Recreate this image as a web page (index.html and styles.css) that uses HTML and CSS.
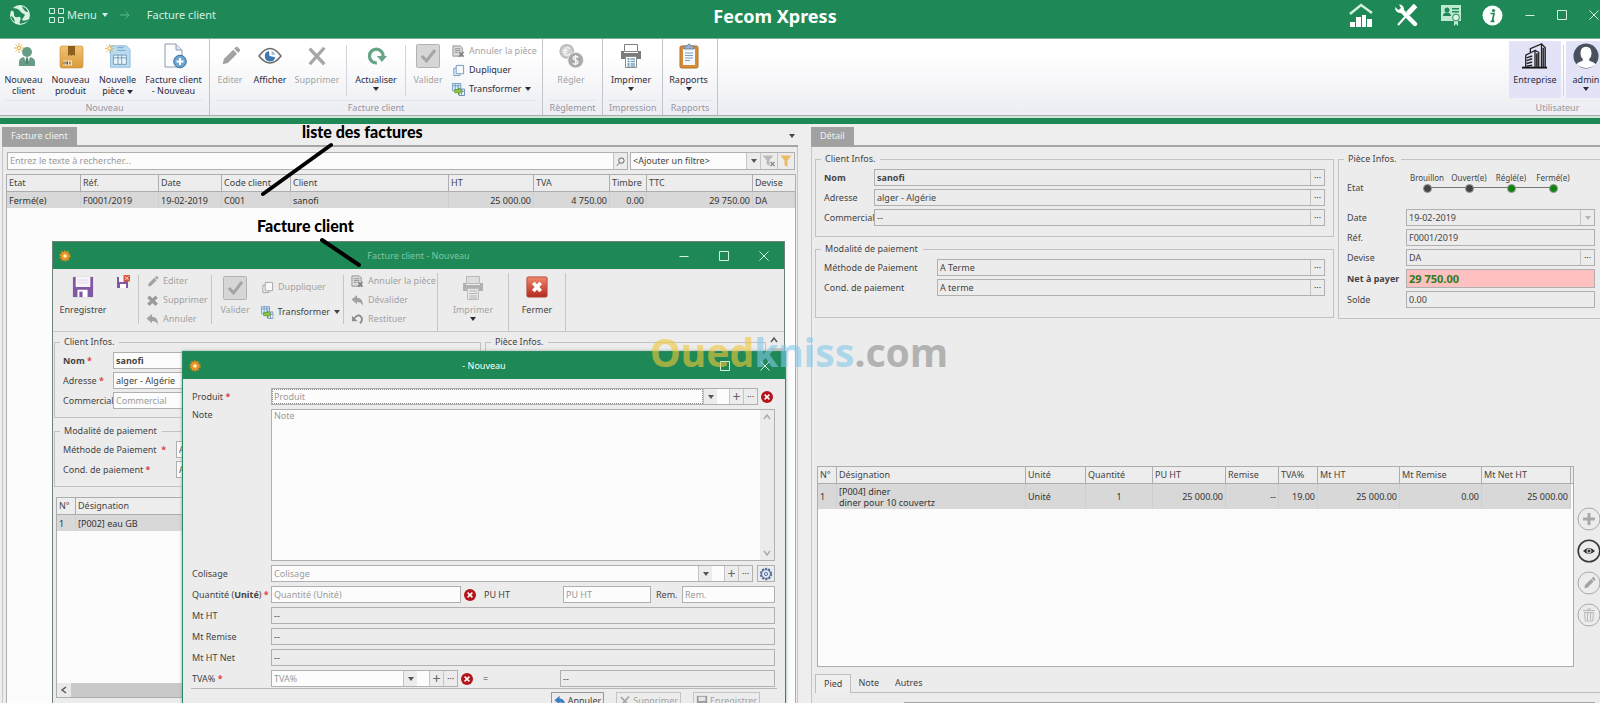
FILE: index.html
```html
<!DOCTYPE html>
<html lang="fr">
<head>
<meta charset="utf-8">
<title>Fecom Xpress</title>
<link rel="stylesheet" href="styles.css">
</head>
<body>
<svg class="defs" aria-hidden="true">
  <defs>
    <linearGradient id="gGold" x1="0" y1="0" x2="0" y2="1"><stop offset="0" stop-color="#f0c274"/><stop offset="1" stop-color="#d99b3c"/></linearGradient>
    <linearGradient id="gRed" x1="0" y1="0" x2="0" y2="1"><stop offset="0" stop-color="#f08a6c"/><stop offset="1" stop-color="#b3281f"/></linearGradient>
  </defs>
  <symbol id="i-spark" viewBox="0 0 10 10"><circle cx="5" cy="5" r="2" fill="#fff4cf" stroke="#e2a83a"/><path d="M5 0v2M5 8v2M0 5h2M8 5h2M1.500 1.500l1.300 1.300M7.200 7.200l1.300 1.300M8.500 1.500 7.200 2.800M1.500 8.500l1.300-1.300" stroke="#e2a83a" stroke-width=".9"/></symbol>
  <symbol id="i-client" viewBox="0 0 26 26"><use href="#i-spark" x="3" y="0" width="10" height="10"/><circle cx="16" cy="9" r="5" fill="#679d86"/><path d="M8 23v-4q0-4 5-5h6q5 1 5 5v4z" fill="#679d86"/><path d="m13 14 3 8 3-8z" fill="#fff"/><path d="m15 15 1-1 1 1 .6 5L16 22l-1.600-2z" fill="#4c8570"/></symbol>
  <symbol id="i-box" viewBox="0 0 26 26"><rect x="2" y="3" width="23" height="22" rx="2" fill="url(#gGold)" stroke="#c98d35" stroke-width=".6"/><path d="M10 3h7v10l-2-1.500-1.500 1.500-1.500-1.500-2 1.500z" fill="#8d5f1d"/><path d="M5 17.500h9v5H5z" fill="#f8e6c4"/><path d="M6 18.500v3M8 18.500v3M9.500 18.500v3M12 18.500v3" stroke="#5b4320"/></symbol>
  <symbol id="i-piece" viewBox="0 0 28 26"><path d="M6 2h17l4 4v19H6z" fill="#b9dcf0" stroke="#8cbad8"/><path d="M13 4h7M13 7h9" stroke="#7f9fb4"/><path d="M9 12h14v10H9z" fill="#e9f6fd" stroke="#6f96b3"/><path d="M9 15h14M14 12v10M18 12v10" stroke="#6f96b3"/><use href="#i-spark" x="0" y="0" width="10" height="10"/></symbol>
  <symbol id="i-docplus" viewBox="0 0 26 26"><path d="M4 1h11l6 6v17H4z" fill="#fbfdff" stroke="#8a9aae"/><path d="M15 1v6h6" fill="#dfe7f0" stroke="#8a9aae"/><circle cx="19" cy="18.500" r="6.300" fill="#6fa4d2" stroke="#3d6fa3"/><path d="M19 15v7M15.500 18.500h7" stroke="#fff" stroke-width="2"/></symbol>
  <symbol id="i-pencil" viewBox="0 0 24 24"><path d="m4 21 1.300-5.600L15.500 5.200l4.300 4.300L9.600 19.700z" fill="#a2a2a2"/><path d="m16.600 4.100 1.800-1.800q1-.8 2 0l2.300 2.300q.8 1 0 2l-1.800 1.800z" fill="#a2a2a2"/></symbol>
  <symbol id="i-eye" viewBox="0 0 26 26"><path d="M2 13q11-15 22 0-11 14-22 0z" fill="#fff" stroke="#6b6b6b" stroke-width="1.500"/><path d="M12 8a5.300 5.300 0 1 0 6.300 6.300L12.500 13z" fill="#3f78b0"/><path d="M14.500 8v3.700h3.700A5 5 0 0 0 14.500 8z" fill="#9bbbd8"/></symbol>
  <symbol id="i-x" viewBox="0 0 24 24"><path d="m4 4 16 17M20 3 4 21" stroke="#a6a6a6" stroke-width="3.600"/></symbol>
  <symbol id="i-refresh" viewBox="0 0 24 24"><path d="M13 19.500a7.500 7.500 0 1 1 6.800-7" fill="none" stroke="#67a588" stroke-width="3.600"/><path d="M13 12h11l-5.500 6.500z" fill="#67a588"/></symbol>
  <symbol id="i-check" viewBox="0 0 26 26"><rect x="1.500" y="1.500" width="23" height="23" rx="1" fill="#d6d6d6" stroke="#b2b2b2"/><path d="m7 13 4.500 5L20 7" fill="none" stroke="#a4a4a4" stroke-width="3"/></symbol>
  <symbol id="i-doccancel" viewBox="0 0 14 14"><path d="M1 1h8l2 2v9H1z" fill="#dcdcdc" stroke="#8f8f8f"/><path d="M3 4h6M3 6h6M3 8h3" stroke="#8f8f8f"/><path d="m7.500 7.500 5 5M12.500 7.500l-5 5" stroke="#7f7f7f" stroke-width="1.600"/></symbol>
  <symbol id="i-copy" viewBox="0 0 14 14"><path d="M2 4.500h6.500v8H2z" fill="#f2f2f2" stroke="currentColor"/><path d="M4.500 1.500h8v9h-8z" fill="#f6f9fc" stroke="currentColor"/></symbol>
  <symbol id="i-transform" viewBox="0 0 14 14"><path d="M.5.5h9v8h-9z" fill="#dcecf8" stroke="#6d9cc3"/><path d="M.5 3h9M3.500.5v8M6.500.5v8" stroke="#6d9cc3"/><path d="M7.500 6.500h6v7h-6z" fill="#eef6fc" stroke="#6d86b3"/><path d="M7.500 9h6M10.500 6.500v7" stroke="#6d86b3"/><path d="M3 7h4V5l4 4-4 3.500V10.500H3z" fill="#8cc63f" stroke="#4f8a1e" stroke-width=".7"/></symbol>
  <symbol id="i-coins" viewBox="0 0 28 28"><circle cx="9.500" cy="9" r="8" fill="#bcbcbc"/><circle cx="9.500" cy="9" r="6" fill="#cfcfcf"/><path d="M13 6q-5-3-6 3t6 3M5 8h6M5 10h5" fill="none" stroke="#f4f4f4" stroke-width="1.400"/><circle cx="19" cy="18.500" r="8.500" fill="#a9a9a9" stroke="#f4f4f6"/><path d="M22 15.500q-3-2-5-.3t2 3.300 1.800 3.500-5-.2M19 13v11" fill="none" stroke="#f6f6f6" stroke-width="1.500"/></symbol>
  <symbol id="i-printer" viewBox="0 0 24 26"><path d="M5.500 1.500h13v7h-13z" fill="#fff" stroke="#808080"/><path d="M2 8h3v2h14V8h3v8H2z" fill="#7b7b7b"/><path d="M6.500 13.500h11v11h-11z" fill="#fff" stroke="#8b8b8b"/><path d="M8.500 16h2M8.500 18.500h2M8.500 21h2M8.500 23h2" stroke="#4f8fb8" stroke-width="1.300"/><path d="M11.500 16H16M11.500 18.500H16M11.500 21H16M11.500 23H16" stroke="#79a7bb" stroke-width="1.300"/></symbol>
  <symbol id="i-printer-off" viewBox="0 0 24 26"><path d="M5.500 1.500h13v7h-13z" fill="#dedede" stroke="#b8b8b8"/><path d="M2 8h3v2h14V8h3v8H2z" fill="#b1b1b1"/><path d="M6.500 13.500h11v11h-11z" fill="#e6e6e6" stroke="#bcbcbc"/><path d="M8.500 16H16M8.500 18.500H16M8.500 21H16M8.500 23H16" stroke="#b5b5b5"/></symbol>
  <symbol id="i-clipboard" viewBox="0 0 24 26"><rect x="3" y="3" width="18" height="22" rx="1.500" fill="#d68c34" stroke="#b0702a"/><path d="M6 6h12v16H6z" fill="#f4f8fc"/><path d="M8 10h8M8 12.500h8M8 15h8M8 17.500h5" stroke="#7f9fc0"/><path d="M7 3h3q2-4 4 0h3v3H7z" fill="#9db0c8" stroke="#5e7696" stroke-width=".8"/></symbol>
  <symbol id="i-building" viewBox="0 0 28 28"><path d="M0 26.500h27" stroke="#111" stroke-width="2"/><path d="M4 26V13l10-5v18M9 10V6l12-5v25M21 1l4 4v21M14 8l4 2v16" fill="none" stroke="#222" stroke-width="1.400"/><path d="m5 16 6-2M5 19l6-2M5 22l6-1.500M5 25l6-1" stroke="#222" stroke-width="1.600"/><path d="M16 11v15M23 5v21" stroke="#333" stroke-width="2"/></symbol>
  <symbol id="i-user" viewBox="0 0 28 28"><circle cx="14" cy="14" r="13.500" fill="#47525e"/><path d="M14 4q6 0 6 7 0 4-2.500 6v2q5 1 7 4-10 8-21 0 2-3 7-4v-2Q8 15 8 11q0-7 6-7z" fill="#fff"/></symbol>
  <symbol id="i-gear" viewBox="0 0 14 14"><circle cx="7" cy="7" r="5.200" fill="none" stroke="currentColor" stroke-width="2" stroke-dasharray="2.200 1.060"/><circle cx="7" cy="7" r="4.300" fill="#e7edf6" stroke="currentColor"/><circle cx="7" cy="7" r="1.600" fill="none" stroke="currentColor"/></symbol>
  <symbol id="i-sun" viewBox="0 0 12 12"><circle cx="6" cy="6" r="4.600" fill="none" stroke="#dd8a1e" stroke-width="2" stroke-dasharray="1.800 1.080"/><circle cx="6" cy="6" r="4.200" fill="#e9952a"/><circle cx="6" cy="6" r="1.800" fill="#fff0b8"/></symbol>
  <symbol id="i-floppy" viewBox="0 0 24 24"><path d="M1 1h22v22H1z" fill="#8258a3"/><path d="M4 1h16v11H4z" fill="#f7f4fa"/><path d="M6 4.500h12M6 7.500h12" stroke="#ddd5e6"/><path d="M6 15h11v8H6z" fill="#fff"/><path d="M8 17h3.500v6H8z" fill="#8258a3"/></symbol>
  <symbol id="i-floppyx" viewBox="0 0 14 14"><path d="M1 2h11v11H1z" fill="#8258a3"/><path d="M3 2h5v5H3z" fill="#f7f4fa"/><path d="M4 9h6v4H4z" fill="#fff"/><path d="M7.500 0H14v6.500H7.500z" fill="#d8573a"/><path d="m9 1.500 3.500 3.500M12.500 1.500 9 5" stroke="#fbd9cf"/></symbol>
  <symbol id="i-xs" viewBox="0 0 14 14"><path d="m2.500 3 9 8.500M11.500 3l-9 8.500" stroke="#9b9b9b" stroke-width="3.600"/></symbol>
  <symbol id="i-undo" viewBox="0 0 14 14"><path d="M.5 6 6.500 1v3Q13 4 13 13q-2-4.500-6.500-4.500V11z" fill="currentColor"/></symbol>
  <symbol id="i-restore" viewBox="0 0 14 14"><path d="M3.500 6Q8-.5 11.500 5q1 4-2 6" fill="none" stroke="#8d8d8d" stroke-width="2"/><path d="M1 3v6h6z" fill="#8d8d8d"/></symbol>
  <symbol id="i-close" viewBox="0 0 24 24"><rect x="1" y="1" width="22" height="22" rx="1.500" fill="url(#gRed)" stroke="#b5463a"/><path d="m8 7.500 8 9M16 7.500l-8 9" stroke="#fff" stroke-width="4"/></symbol>
  <symbol id="i-err" viewBox="0 0 12 12"><circle cx="6" cy="6" r="6" fill="#b3151b"/><path d="m3.600 3.600 4.800 4.800M8.400 3.600 3.600 8.400" stroke="#fff" stroke-width="1.500"/></symbol>
  <symbol id="i-min" viewBox="0 0 10 10"><path d="M.5 5.500h9" stroke="currentColor"/></symbol>
  <symbol id="i-max" viewBox="0 0 10 10"><path d="M.5.5h9v9h-9z" fill="none" stroke="currentColor"/></symbol>
  <symbol id="i-cls" viewBox="0 0 10 10"><path d="m.5.5 9 9M9.500.5l-9 9" stroke="currentColor"/></symbol>
  <symbol id="i-funnel" viewBox="0 0 12 12"><path d="M.5.5h11l-4 5V12l-3-2V5.500z" fill="currentColor"/></symbol>
</svg>

<header class="titlebar">
  <svg class="globe" viewBox="0 0 22 22"><circle cx="11" cy="11" r="10" fill="#d9f0e3"/><path d="M3 4q6 0 8 3t4 3-1 4 4 2-1 2-6-1-2-4-4-3-3-3z" fill="#1e8956"/><path d="M13 2q5 2 6 6-4 0-6-6zM2 12q3 1 4 6-4-2-4-6z" fill="#1e8956"/></svg>
  <button class="menu"><svg width="15" height="15" viewBox="0 0 15 15"><path d="M.5.5h5v5h-5zM9.500.5h5v5h-5zM.5 9.500h5v5h-5zM9.500 9.500h5v5h-5z" fill="none" stroke="currentColor"/></svg>Menu<i class="caret"></i></button>
  <svg class="arrow" width="10" height="10" viewBox="0 0 10 10"><path d="M0 5h9M5.500 1.500 9 5 5.500 8.500" fill="none" stroke="#5fb58b"/></svg>
  <span class="crumb">Facture client</span>
  <h1>Fecom Xpress</h1>
  <nav class="tools">
    <button aria-label="Statistiques"><svg width="24" height="24" viewBox="0 0 24 24"><path d="M1 19h5v5H1zM7 14h5v10H7zM13 12h4v12h-4zM18 16h5v8h-5z" fill="#fff"/><path d="m1 11 11-9 11 8" fill="none" stroke="#d5f0e1" stroke-width="2.400"/></svg></button>
    <button aria-label="Outils"><svg width="24" height="24" viewBox="0 0 24 24"><path d="M21.500 2.500 4 22" stroke="#fff" stroke-width="2"/><path d="m21.500 2.500-7.500 8" stroke="#fff" stroke-width="5"/><path d="m8 8 13 13" stroke="#fff" stroke-width="4.400" stroke-linecap="round"/><path d="M5 1.500q5 0 5 5.500L7 10Q1 10 1 4l3.500 3L7 5z" fill="#fff"/></svg></button>
    <button aria-label="Licence"><svg width="22" height="24" viewBox="0 0 22 24"><path d="M1 2h20v16h-3v5l-2-2-2 2v-5H1z" fill="#bfe8d1"/><circle cx="7" cy="7" r="2.500" fill="#1e8956"/><path d="M3 13q0-3.500 4-3.500t4 3.500zM12 5h7v1.500h-7zM12 8h7v1.500h-7z" fill="#1e8956"/><circle cx="16" cy="14.500" r="3.400" fill="#d9f3e5" stroke="#1e8956"/></svg></button>
    <button aria-label="Informations"><svg width="21" height="21" viewBox="0 0 21 21"><circle cx="10.500" cy="10.500" r="10" fill="#fff"/><circle cx="11.500" cy="5.500" r="1.600" fill="#1e8956"/><path d="M8.500 8.500h3.500l-1.500 7h1.500M8.500 16.500h4" fill="none" stroke="#1e8956" stroke-width="1.700"/></svg></button>
  </nav>
  <div class="winctl"><button aria-label="Réduire"><svg><use href="#i-min"/></svg></button><button aria-label="Agrandir"><svg><use href="#i-max"/></svg></button><button aria-label="Quitter"><svg><use href="#i-cls"/></svg></button></div>
</header>

<div class="ribbon">
  <section class="group g-new">
    <div class="items">
      <button class="big"><svg><use href="#i-client"/></svg>Nouveau<br>client</button>
      <button class="big"><svg><use href="#i-box"/></svg>Nouveau<br>produit</button>
      <button class="big"><svg><use href="#i-piece"/></svg>Nouvelle<span>pièce <i class="caret"></i></span></button>
      <button class="big wide"><svg><use href="#i-docplus"/></svg>Facture client<br>- Nouveau</button>
    </div>
    <h2>Nouveau</h2>
  </section>
  <section class="group g-invoice">
    <div class="items">
      <button class="big w40" disabled><svg class="sm"><use href="#i-pencil"/></svg>Editer</button>
      <button class="big w40"><svg><use href="#i-eye"/></svg>Afficher</button>
      <button class="big w54" disabled><svg class="sm"><use href="#i-x"/></svg>Supprimer</button>
      <i class="vsep"></i>
      <button class="big w54"><svg class="sm"><use href="#i-refresh"/></svg>Actualiser<i class="caret"></i></button>
      <i class="vsep"></i>
      <button class="big w40" disabled><svg><use href="#i-check"/></svg>Valider</button>
      <div class="smalls">
        <button disabled><svg><use href="#i-doccancel"/></svg>Annuler la pièce</button>
        <button><svg class="blue"><use href="#i-copy"/></svg>Dupliquer</button>
        <button><svg><use href="#i-transform"/></svg>Transformer <i class="caret"></i></button>
      </div>
    </div>
    <h2>Facture client</h2>
  </section>
  <section class="group g-pay"><div class="items"><button class="big" disabled><svg><use href="#i-coins"/></svg>Régler</button></div><h2>Règlement</h2></section>
  <section class="group g-pay"><div class="items"><button class="big"><svg><use href="#i-printer"/></svg>Imprimer<i class="caret"></i></button></div><h2>Impression</h2></section>
  <section class="group g-rep"><div class="items"><button class="big"><svg><use href="#i-clipboard"/></svg>Rapports<i class="caret"></i></button></div><h2>Rapports</h2></section>
  <section class="group g-user">
    <div class="items">
      <button class="big tint w52"><svg><use href="#i-building"/></svg>Entreprise</button>
      <i class="vsep"></i>
      <button class="big tint w40"><svg><use href="#i-user"/></svg>admin<i class="caret"></i></button>
    </div>
    <h2>Utilisateur</h2>
  </section>
</div>

<main class="workspace">
  <section class="pane list">
    <div class="tabs"><span class="tab">Facture client</span><i class="caret"></i></div>
    <div class="body">
      <div class="filters">
        <div class="field white grow"><input aria-label="Rechercher" placeholder="Entrez le texte à rechercher..."><button aria-label="Chercher"><svg width="9" height="9" viewBox="0 0 10 10"><circle cx="6" cy="4" r="3" fill="none" stroke="#555"/><path d="M4 6.500 1 9.500" stroke="#555"/></svg></button></div>
        <div class="field white filter"><select aria-label="Filtre"><option>&lt;Ajouter un filtre&gt;</option></select><span class="btn"><i class="caret"></i></span><button class="fb" aria-label="Effacer le filtre"><svg width="14" height="12" viewBox="0 0 14 12"><path d="M.5.5h11l-4 4.500v6l-3-2V5z" fill="#b9b9b9"/><path d="m8.500 7 4 4M12.500 7l-4 4" stroke="#8d8d8d" stroke-width="1.500"/></svg></button><button class="fb" aria-label="Filtrer"><svg class="amber" width="12" height="12"><use href="#i-funnel"/></svg></button></div>
      </div>
      <div class="grid">
        <table>
          <colgroup><col class="c74"><col class="c78"><col class="c63"><col class="c69"><col><col class="c85"><col class="c76"><col class="c37"><col class="c106"><col class="c43"></colgroup>
          <thead><tr><th>Etat</th><th>Réf.</th><th>Date</th><th>Code client</th><th>Client</th><th>HT</th><th>TVA</th><th>Timbre</th><th>TTC</th><th>Devise</th></tr></thead>
          <tbody><tr><td>Fermé(e)</td><td>F0001/2019</td><td>19-02-2019</td><td>C001</td><td>sanofi</td><td class="n">25 000.00</td><td class="n">4 750.00</td><td class="n">0.00</td><td class="n">29 750.00</td><td>DA</td></tr></tbody>
        </table>
      </div>
    </div>
  </section>

  <section class="pane detail">
    <div class="tabs"><span class="tab">Détail</span></div>
    <div class="body">
      <div class="infos">
        <div class="col">
          <fieldset class="client"><legend>Client Infos.</legend>
            <label for="nom" class="b">Nom</label><div class="field"><input class="b" id="nom" value="sanofi" readonly><button>···</button></div>
            <label for="adr">Adresse</label><div class="field"><input id="adr" value="alger - Algérie" readonly><button>···</button></div>
            <label for="com">Commercial</label><div class="field"><input id="com" value="--" readonly><button>···</button></div>
          </fieldset>
          <fieldset class="modal"><legend>Modalité de paiement</legend>
            <label for="met">Méthode de Paiement</label><div class="field"><input id="met" value="A Terme" readonly><button>···</button></div>
            <label for="con">Cond. de paiement</label><div class="field"><input id="con" value="A terme" readonly><button>···</button></div>
          </fieldset>
        </div>
        <fieldset class="piece"><legend>Pièce Infos.</legend>
          <span>Etat</span><ol class="steps"><li>Brouillon</li><li>Ouvert(e)</li><li class="on">Réglé(e)</li><li class="on">Fermé(e)</li></ol>
          <label for="dat">Date</label><div class="field"><select id="dat"><option>19-02-2019</option></select><span class="btn off"><i class="caret"></i></span></div>
          <label for="ref">Réf.</label><div class="field"><input id="ref" value="F0001/2019" readonly></div>
          <label for="dev">Devise</label><div class="field"><input id="dev" value="DA" readonly><button>···</button></div>
          <label for="net" class="b">Net à payer</label><div class="field net"><input id="net" value="29 750.00" readonly></div>
          <label for="sol">Solde</label><div class="field"><input id="sol" value="0.00" readonly></div>
        </fieldset>
      </div>
      <div class="lines">
        <div class="grid">
          <table>
            <colgroup><col class="c19"><col><col class="c60"><col class="c67"><col class="c73"><col class="c53"><col class="c39"><col class="c82"><col class="c82"><col class="c89"><col class="c2"></colgroup>
            <thead><tr><th>N°</th><th>Désignation</th><th>Unité</th><th>Quantité</th><th>PU HT</th><th>Remise</th><th>TVA%</th><th>Mt HT</th><th>Mt Remise</th><th>Mt Net HT</th><th></th></tr></thead>
            <tbody><tr><td>1</td><td>[P004] diner<br>diner pour 10 couvertz</td><td>Unité</td><td class="c">1</td><td class="n">25 000.00</td><td class="n">--</td><td class="n">19.00</td><td class="n">25 000.00</td><td class="n">0.00</td><td class="n">25 000.00</td><td class="blank"></td></tr></tbody>
          </table>
        </div>
        <div class="rounds">
          <button aria-label="Ajouter"><svg viewBox="0 0 24 24"><circle cx="12" cy="12" r="11"/><path d="M12 6v12M6 12h12" stroke-width="3"/></svg></button>
          <button class="dark" aria-label="Voir"><svg viewBox="0 0 24 24"><circle cx="12" cy="12" r="10.800" stroke-width="1.600"/><path d="M6 12q6-6 12 0-6 6-12 0z" fill="#333" stroke="none"/><circle cx="12" cy="12" r="2" stroke="#eee"/></svg></button>
          <button aria-label="Editer"><svg viewBox="0 0 24 24"><circle cx="12" cy="12" r="11"/><g stroke="none"><use href="#i-pencil" x="5" y="5" width="14" height="14"/></g></svg></button>
          <button aria-label="Supprimer"><svg viewBox="0 0 24 24"><circle cx="12" cy="12" r="11"/><path d="M6 7.500h12M10 6h4M7.500 9.500l.8 8.500h7.400l.8-8.500zM10.500 10v7M13.500 10v7" stroke-width=".8"/></svg></button>
        </div>
      </div>
      <div class="foot"><div class="ftabs"><button class="sel">Pied</button><button>Note</button><button>Autres</button></div><div class="fbody"><div class="fbox"></div></div></div>
    </div>
  </section>
</main>

<section class="win win-invoice">
  <header><svg class="sun"><use href="#i-sun"/></svg><h3>Facture client - Nouveau</h3><div class="ctl"><button aria-label="Réduire"><svg><use href="#i-min"/></svg></button><button aria-label="Agrandir"><svg><use href="#i-max"/></svg></button><button aria-label="Fermer"><svg><use href="#i-cls"/></svg></button></div></header>
  <div class="toolbar">
    <button class="big w60"><svg class="sm"><use href="#i-floppy"/></svg>Enregistrer</button>
    <button class="mini" aria-label="Enregistrer et fermer"><svg width="14" height="14"><use href="#i-floppyx"/></svg></button>
    <i class="vsep"></i>
    <div class="smalls w66"><button disabled><svg><use href="#i-pencil"/></svg>Editer</button><button disabled><svg><use href="#i-xs"/></svg>Supprimer</button><button disabled><svg><use href="#i-undo"/></svg>Annuler</button></div>
    <i class="vsep"></i>
    <button class="big w40" disabled><svg><use href="#i-check"/></svg>Valider</button>
    <div class="smalls two"><button disabled><svg><use href="#i-copy"/></svg>Duppliquer</button><button><svg><use href="#i-transform"/></svg>Transformer <i class="caret"></i></button></div>
    <i class="vsep"></i>
    <div class="smalls w90"><button disabled><svg><use href="#i-doccancel"/></svg>Annuler la pièce</button><button disabled><svg><use href="#i-undo"/></svg>Dévalider</button><button disabled><svg><use href="#i-restore"/></svg>Restituer</button></div>
    <i class="vsep full"></i>
    <button class="big w70" disabled><svg><use href="#i-printer-off"/></svg>Imprimer<i class="caret"></i></button>
    <i class="vsep full"></i>
    <button class="big w56"><svg class="sm"><use href="#i-close"/></svg>Fermer</button>
    <i class="vsep full"></i>
  </div>
  <div class="wbody">
    <div class="col">
      <fieldset class="client"><legend>Client Infos.</legend>
        <label for="n2" class="b">Nom <em>*</em></label><div class="field white"><input class="b" id="n2" value="sanofi"></div>
        <label for="a2">Adresse <em>*</em></label><div class="field white"><input id="a2" value="alger - Algérie"></div>
        <label for="c2">Commercial</label><div class="field white"><input id="c2" placeholder="Commercial"></div>
      </fieldset>
      <fieldset class="modal"><legend>Modalité de paiement</legend>
        <label for="m2">Méthode de Paiement &nbsp;<em>*</em></label><div class="field white"><input id="m2" value="A Terme"></div>
        <label for="k2">Cond. de paiement <em>*</em></label><div class="field white"><input id="k2" value="A terme"></div>
      </fieldset>
      <div class="grid">
        <table>
          <colgroup><col class="c19"><col></colgroup>
          <thead><tr><th>N°</th><th>Désignation</th></tr></thead>
          <tbody><tr><td>1</td><td>[P002] eau GB</td></tr></tbody>
        </table>
        <div class="hscroll"><svg width="8" height="8" viewBox="0 0 8 8"><path d="M6 1 2 4l4 3" fill="none" stroke="#555" stroke-width="1.400"/></svg></div>
      </div>
    </div>
    <fieldset class="piece"><legend>Pièce Infos.</legend></fieldset>
    <div class="vscroll"><svg width="8" height="8" viewBox="0 0 8 8"><path d="m1 6 3-4 3 4" fill="none" stroke="#555" stroke-width="1.400"/></svg></div>
  </div>
</section>

<section class="win win-line">
  <header><svg class="sun"><use href="#i-sun"/></svg><h3>- Nouveau</h3><div class="ctl"><button aria-label="Agrandir"><svg><use href="#i-max"/></svg></button><button aria-label="Fermer"><svg><use href="#i-cls"/></svg></button></div></header>
  <form class="lform">
    <label for="pr">Produit <em>*</em></label>
    <div class="row"><div class="field white grow focus"><input id="pr" placeholder="Produit"><span class="btn"><i class="caret"></i></span><span class="gap"></span><button type="button" class="plus">+</button><button type="button">···</button></div><svg class="err"><use href="#i-err"/></svg><span class="pad"></span></div>
    <label for="no" class="top">Note</label>
    <div class="field white note"><textarea id="no" placeholder="Note"></textarea><div class="track"><svg width="8" height="8" viewBox="0 0 8 8"><path d="m1 6 3-4 3 4" fill="none" stroke="#aaa" stroke-width="1.400"/></svg><svg width="8" height="8" viewBox="0 0 8 8"><path d="m1 2 3 4 3-4" fill="none" stroke="#aaa" stroke-width="1.400"/></svg></div></div>
    <label for="co">Colisage</label>
    <div class="row"><div class="field white grow"><input id="co" placeholder="Colisage"><span class="btn"><i class="caret"></i></span><span class="gap"></span><button type="button" class="plus">+</button><button type="button">···</button></div><button type="button" class="gear" aria-label="Options"><svg width="14" height="14"><use href="#i-gear"/></svg></button></div>
    <label for="qt">Quantité (<b>Unité</b>) <em>*</em></label>
    <div class="row"><div class="field white grow"><input id="qt" placeholder="Quantité (Unité)"></div><svg class="err"><use href="#i-err"/></svg><label for="pu" class="l-pu">PU HT</label><div class="field white f88"><input id="pu" placeholder="PU HT"></div><label for="re" class="l-re">Rem.</label><div class="field white f93"><input id="re" placeholder="Rem."></div></div>
    <label for="mh">Mt HT</label><div class="field"><input id="mh" value="--" readonly></div>
    <label for="mr">Mt Remise</label><div class="field"><input id="mr" value="--" readonly></div>
    <label for="mn">Mt HT Net</label><div class="field"><input id="mn" value="--" readonly></div>
    <label for="tv">TVA% <em>*</em></label>
    <div class="row"><div class="field white grow"><input id="tv" placeholder="TVA%"><span class="btn"><i class="caret"></i></span><span class="gap"></span><button type="button" class="plus">+</button><button type="button">···</button></div><svg class="err"><use href="#i-err"/></svg><span class="eq">=</span><div class="field f215"><input aria-label="Montant TVA" value="--" readonly></div></div>
  </form>
  <footer><button><svg class="blue2"><use href="#i-undo"/></svg>Annuler</button><button disabled><svg><use href="#i-x"/></svg>Supprimer</button><button disabled><svg viewBox="0 0 14 14"><path d="M1 1h12v12H1z" fill="#999"/><path d="M3 2h8v5H3zM4 9h6v3H4z" fill="#e6e6e6"/></svg>Enregistrer</button></footer>
</section>

<p class="note-text t1">liste des factures</p>
<p class="note-text t2">Facture client</p>
<svg class="strokes" width="400" height="300"><path d="m331 145-68 49M322 240l37 25" stroke="#000" stroke-width="4" stroke-linecap="round"/></svg>
<p class="mark"><span class="m1">Oued</span><span class="m2">kniss</span><span class="m3">.com</span></p>
</body>
</html>
```
FILE: styles.css
```css
* { box-sizing: border-box; }
html, body { height: 100%; }
body {
  margin: 0;
  display: flex;
  flex-direction: column;
  overflow: hidden;
  background: #eeeeee;
  color: #444;
  font: 9px/12px "Noto Sans", "Open Sans", sans-serif;
}
button, input, select, textarea { font: inherit; color: inherit; margin: 0; }
button { border: 0; padding: 0; background: none; white-space: nowrap; }
h1, h2, h3, p, ol { margin: 0; padding: 0; font: inherit; list-style: none; }
label, span { white-space: nowrap; }
em { color: #e23b3b; font-style: normal; font-weight: bold; }
.b { font-weight: bold; }
.defs { position: absolute; width: 0; height: 0; }
.caret {
  display: inline-block;
  border: 3px solid transparent;
  border-top: 4px solid currentColor;
  border-bottom: 0;
}
.grow { flex: 1; }

/* Title bar */
.titlebar {
  position: relative;
  display: flex;
  align-items: center;
  flex: none;
  height: 39px;
  padding: 0 0 8px 9px;
  overflow: hidden;
  background: #1e8956;
  border-bottom: 1px solid #7fae97;
  color: #d5efe1;
  font-size: 11px;
}
.globe { width: 22px; height: 22px; }
.menu { display: flex; align-items: center; gap: 3px; margin-left: 18px; }
.menu .caret { margin-left: 2px; }
.arrow { margin: 0 17px 0 12px; }
.titlebar h1 {
  position: absolute;
  left: 0;
  right: 0;
  top: 4px;
  padding-right: 50px;
  text-align: center;
  color: #fff;
  font: bold 18px/24px "Noto Sans", sans-serif;
}
.tools { display: flex; margin-left: auto; position: relative; }
.tools button { width: 45px; height: 30px; display: flex; align-items: center; justify-content: center; }
.tools button:last-child { width: 41px; padding-right: 3px; }
.winctl { display: flex; margin-right: -10px; position: relative; }
.winctl button { width: 32px; height: 30px; display: flex; align-items: center; justify-content: center; }
.winctl svg { width: 10px; height: 10px; }

/* Ribbon */
.ribbon {
  display: flex;
  flex: none;
  height: 85px;
  overflow: hidden;
  border-bottom: 6px solid #1e8956;
  box-shadow: inset 0 -2px #cfe5da, inset 0 -3px #a9adb0;
  background: linear-gradient(#ffffff 20%, #edeef3 90%);
  color: #2b2b40;
}
.group {
  display: flex;
  flex-direction: column;
  flex: none;
  margin-bottom: 3px;
  border-right: 1px solid #c4c5cc;
}
.items { display: flex; height: 61px; padding-top: 2px; justify-content: center; }
.group h2 {
  margin: 0 6px;
  border-top: 1px solid #e2e2e8;
  text-align: center;
  line-height: 14px;
  color: #9696a0;
}
.g-new { width: 210px; }
.g-new .items, .g-invoice .items { justify-content: flex-start; }
.g-invoice { width: 333px; }
.g-pay { width: 60px; }
.g-rep { width: 55px; }
.g-pay .items, .g-rep .items { padding-right: 3px; }
.g-user { width: 99px; margin-left: auto; margin-right: -7px; border: 0; }
.g-user h2 { border-color: #ececf2; }
.big {
  display: flex;
  flex-direction: column;
  align-items: center;
  flex: none;
  width: 47px;
  line-height: 11px;
  padding-top: 2px;
  white-space: normal;
  text-align: center;
}
.big svg { width: 26px; height: 26px; margin-bottom: 5px; }
.big svg.sm { width: 22px; height: 22px; margin: 2px 0 7px; }
.big > .caret { margin-top: 2px; color: #2b2b33; }
.big.wide { width: 65px; white-space: nowrap; }
.big.w40 { width: 40px; }
.big.w52 { width: 52px; }
.big.w54 { width: 54px; }
.big.w56 { width: 56px; }
.big.w60 { width: 60px; }
.big.w70 { width: 70px; }
.smalls.w66 { width: 66px; }
.smalls.w90 { width: 90px; }
button:disabled { color: #a3a3a3; }
.tint { background: #e3e3f7; height: 57px; }
.vsep { flex: none; width: 1px; margin: 4px 2px; background: #d4d4da; }
.smalls { display: flex; flex-direction: column; gap: 5px; padding: 3px 0 0 4px; }
.smalls button { display: flex; align-items: center; gap: 4px; height: 14px; }
.smalls svg { width: 13px; height: 13px; }
.blue { color: #6c95bf; }

/* Workspace */
.workspace {
  flex: 1;
  min-height: 0;
  display: grid;
  grid-template-columns: 798fr 789fr;
  gap: 13px;
}
.pane { display: flex; flex-direction: column; min-width: 0; min-height: 0; }
.tabs {
  display: flex;
  align-items: center;
  height: 23px;
  padding-top: 3px;
  border-bottom: 2px solid #a5a5a5;
  justify-content: space-between;
}
.tabs > .caret { margin-right: 3px; }
.tab { padding: 3px 9px 4px; background: #a1a1a1; color: #f3f3f3; }
.list .tabs { margin-left: 2px; }
.list .body {
  flex: 1;
  display: flex;
  flex-direction: column;
  min-height: 0;
  margin-left: 2px;
  padding: 5px 1px 0 3px;
  border: solid #c6c6c6;
  border-width: 0 1px;
  background: #ececec;
}
.filters { display: flex; gap: 2px; padding: 0 1px; margin-bottom: 4px; }
.filters .field { height: 18px; }
.filter { width: 165px; }
.fb.fb { width: 17px; }
.amber { color: #ecb964; }

.field {
  display: flex;
  min-width: 0;
  height: 17px;
  border: 1px solid #b0b0b0;
  background: #ececec;
}
.field input, .field select, .field textarea {
  flex: 1;
  min-width: 0;
  width: 0;
  padding: 0 2px;
  border: 0;
  outline: 0;
  resize: none;
  appearance: none;
  background: transparent;
}
.field ::placeholder { color: #9b9b9b; opacity: 1; }
.field.white { background: #fcfcfc; }
.field button, .btn {
  display: flex;
  align-items: center;
  justify-content: center;
  flex: none;
  width: 14px;
  border-left: 1px solid #c4c4c4;
  background: #ececec;
}
.btn { color: #555; }
.btn.off { color: #b5b5b5; }
.gap { width: 12px; }
.field .plus { font-size: 14px; color: #666; }

/* Data grids */
.grid { border: 1px solid #adadad; background: #fcfcfc; }
.list .grid { flex: 1; border-bottom: 0; }
table { width: 100%; table-layout: fixed; border-collapse: separate; border-spacing: 0; }
th, td { padding: 0 2px; text-align: left; white-space: nowrap; overflow: hidden; }
th {
  height: 17px;
  background: #ededed;
  font-weight: normal;
  border-right: 1px solid #adadad;
  border-bottom: 1px solid #adadad;
}
th:last-child { border-right: 0; }
td { height: 16px; background: #d8d8d8; border-right: 1px solid #d0d0d0; color: #333; line-height: 11px; }
td.n { text-align: right; }
td.c { text-align: center; }
td.blank { background: #fcfcfc; border: 0; }
th:empty, td.blank { padding: 0; }
.c2 { width: 2px; }
.c19 { width: 19px; }
.c37 { width: 37px; }
.c39 { width: 39px; }
.c43 { width: 42px; }
.c53 { width: 53px; }
.c60 { width: 60px; }
.c63 { width: 63px; }
.c67 { width: 67px; }
.c69 { width: 69px; }
.c73 { width: 73px; }
.c74 { width: 74px; }
.c76 { width: 76px; }
.c78 { width: 78px; }
.c82 { width: 82px; }
.c85 { width: 85px; }
.c89 { width: 89px; }
.c106 { width: 106px; }

/* Detail pane */
.detail .body {
  flex: 1;
  display: flex;
  flex-direction: column;
  min-height: 0;
  padding: 6px 0 0 3px;
  border-left: 1px solid #c6c6c6;
  background: #ececec;
}
fieldset {
  display: grid;
  align-content: start;
  align-items: center;
  gap: 3px 0;
  min-width: 0;
  margin: 0;
  padding: 4px 8px 10px;
  border: 1px solid #c2c2c2;
}
legend { padding: 0 5px 0 4px; margin-left: -3px; }
.infos { display: grid; grid-template-columns: 1fr 266px; gap: 4px; }
.detail .infos { margin-right: -4px; }
.col { display: flex; flex-direction: column; gap: 6px; min-width: 0; }
fieldset.client { grid-template-columns: 50px 1fr; }
fieldset.modal { grid-template-columns: 113px 1fr; }
.detail .modal { padding-bottom: 21px; }
.detail .piece { grid-template-columns: 59px 1fr; }
.steps {
  display: grid;
  grid-template-columns: repeat(4, 42px);
  height: 37px;
  padding-top: 4px;
  font-size: 8px;
  line-height: 10px;
}
.steps li {
  display: flex;
  flex-direction: column;
  align-items: center;
  gap: 1px;
  background: linear-gradient(#777, #777) 0 14px / 100% 1px no-repeat;
}
.steps li:first-child { background-position: 21px 14px; }
.steps li:last-child { background-size: 21px 1px; }
.steps li::after {
  content: "";
  width: 7px;
  height: 7px;
  border-radius: 50%;
  background: #444;
  border: 1px solid #999;
}
.steps li.on::after { background: #0d850d; }
.field.net { height: 19px; background: #ffc0c0; color: #2f7a1c; font-weight: bold; font-size: 11px; }
.lines {
  flex: 1;
  min-height: 0;
  display: grid;
  grid-template-columns: 1fr 24px;
  gap: 3px;
  margin: 147px -1px 0 2px;
}
.lines td { height: 25px; }
.rounds { display: flex; flex-direction: column; justify-content: center; gap: 8px; }
.rounds button { width: 24px; height: 24px; color: #a9a9a9; }
.rounds svg { display: block; width: 24px; height: 24px; fill: none; stroke: currentColor; }
.rounds .dark { color: #3a3a3a; }
.foot { padding-top: 7px; }
.ftabs { display: flex; height: 19px; border-bottom: 1px solid #bdbdbd; }
.ftabs button { padding: 0 7px; margin-right: 2px; }
.ftabs .sel {
  height: 19px;
  padding: 0 8px;
  margin-right: 0;
  border: 1px solid #bdbdbd;
  border-bottom: 0;
  background: #efefef;
}
.fbody { height: 10px; padding: 9px 5px 0 89px; }
.fbox { border-top: 1px solid #a5a5a5; }

/* Floating windows */
.win {
  position: absolute;
  bottom: 0;
  display: flex;
  flex-direction: column;
  overflow: hidden;
  background: #ececec;
  border: 1px solid #6f8178;
  border-bottom: 0;
}
.win-invoice { left: 52px; top: 241px; width: 733px; }
.win-line { left: 182px; top: 351px; width: 604px; border-color: #2b8b60; box-shadow: 0 0 3px #8aa898; }
.win > header {
  position: relative;
  display: flex;
  align-items: center;
  flex: none;
  height: 27px;
  padding-left: 6px;
  background: #1e8956;
  color: #d8efe3;
}
.sun { width: 12px; height: 12px; }
.win h3 { position: absolute; left: 0; right: 0; text-align: center; color: #fff; }
.win-invoice h3 { color: #7fc6a3; }
.ctl { display: flex; margin-left: auto; position: relative; }
.ctl button { width: 40px; height: 24px; display: flex; justify-content: center; align-items: center; }
.ctl svg { width: 10px; height: 10px; }
.toolbar {
  display: flex;
  flex: none;
  height: 63px;
  padding-top: 3px;
  border-bottom: 1px solid #c8c8c8;
}
.toolbar .big { padding-top: 3px; }
.toolbar .big svg.sm { margin: 1px 0 6px; }
.toolbar .big svg { margin-bottom: 3px; }
.mini { width: 20px; height: 22px; margin-right: 2px; align-self: flex-start; }
.toolbar .vsep { margin: 3px 3px 7px; background: #c6c6c6; }
.toolbar .vsep.full { margin: 1px 0 0; }
.toolbar .smalls { padding-top: 2px; }
.toolbar .two { gap: 11px; padding: 8px 0 0 6px; width: 85px; }
.wbody { flex: 1; min-height: 0; display: grid; grid-template-columns: 427px 1fr 14px; gap: 0 4px; padding: 4px 0 0 1px; }
.wbody .col { gap: 7px; }
.wbody .client, .wbody .modal { padding-bottom: 8px; }
.wbody .grid { margin: 3px 0 0 2px; height: 201px; display: flex; flex-direction: column; justify-content: space-between; }
.hscroll { height: 14px; padding: 3px; background: linear-gradient(90deg, #e9e9e9 14px, #c9c9c9 14px); }
.hscroll svg, .vscroll svg { display: block; }
.vscroll { background: linear-gradient(transparent 12px, #c9c9c9 12px); }

/* Line form */
.lform {
  display: grid;
  grid-template-columns: 79px minmax(0, 1fr);
  gap: 4px 0;
  align-items: center;
  padding: 9px 10px 1px 9px;
}
.row { display: flex; align-items: center; }
.lform .top { align-self: start; }
.note { height: 152px; }
.track { width: 14px; display: flex; flex-direction: column; justify-content: space-between; align-items: center; padding: 3px 0; background: #ebebeb; }
.focus input { outline: 1px dotted #888; outline-offset: -1px; }
.err { width: 12px; height: 12px; margin-left: 3px; flex: none; }
.pad { width: 2px; }
.gear { width: 18px; height: 17px; margin-left: 4px; border: 1px solid #b0b0b0; color: #566f9c; display: flex; align-items: center; justify-content: center; }
.l-pu { width: 87px; padding-left: 8px; }
.l-re { width: 31px; padding-left: 5px; }
.f88 { width: 88px; }
.f93 { width: 93px; }
.f215 { width: 215px; }
.eq { width: 87px; padding-left: 10px; }
.win footer {
  display: flex;
  justify-content: flex-end;
  gap: 12px;
  margin: 0 8px;
  padding: 3px 17px 0 0;
  border-top: 1px solid #b8b8b8;
}
.win footer button { display: flex; align-items: center; gap: 2px; height: 16px; padding: 0 2px; border: 1px solid #c4c4c4; border-bottom: 0; flex: none; }
.win footer button:first-child { border-color: #999; }
.win footer svg { width: 12px; height: 12px; }
.blue2 { color: #3f7fbf; }

/* Annotations */
.note-text { position: absolute; color: #000; font: 900 16px/18px Lato, sans-serif; white-space: nowrap; }
.t1 { left: 302px; top: 123px; }
.t2 { left: 257px; top: 217px; }
.strokes { position: absolute; left: 0; top: 0; pointer-events: none; fill: none; }
.mark {
  position: absolute;
  left: 650px;
  top: 324px;
  pointer-events: none;
  opacity: .6;
  font: bold 39px/56px "Noto Sans", sans-serif;
}
.m1 { color: #f0c93a; }
.m2 { color: #82c8e8; }
.m3 { color: #8c8c8c; }
```
